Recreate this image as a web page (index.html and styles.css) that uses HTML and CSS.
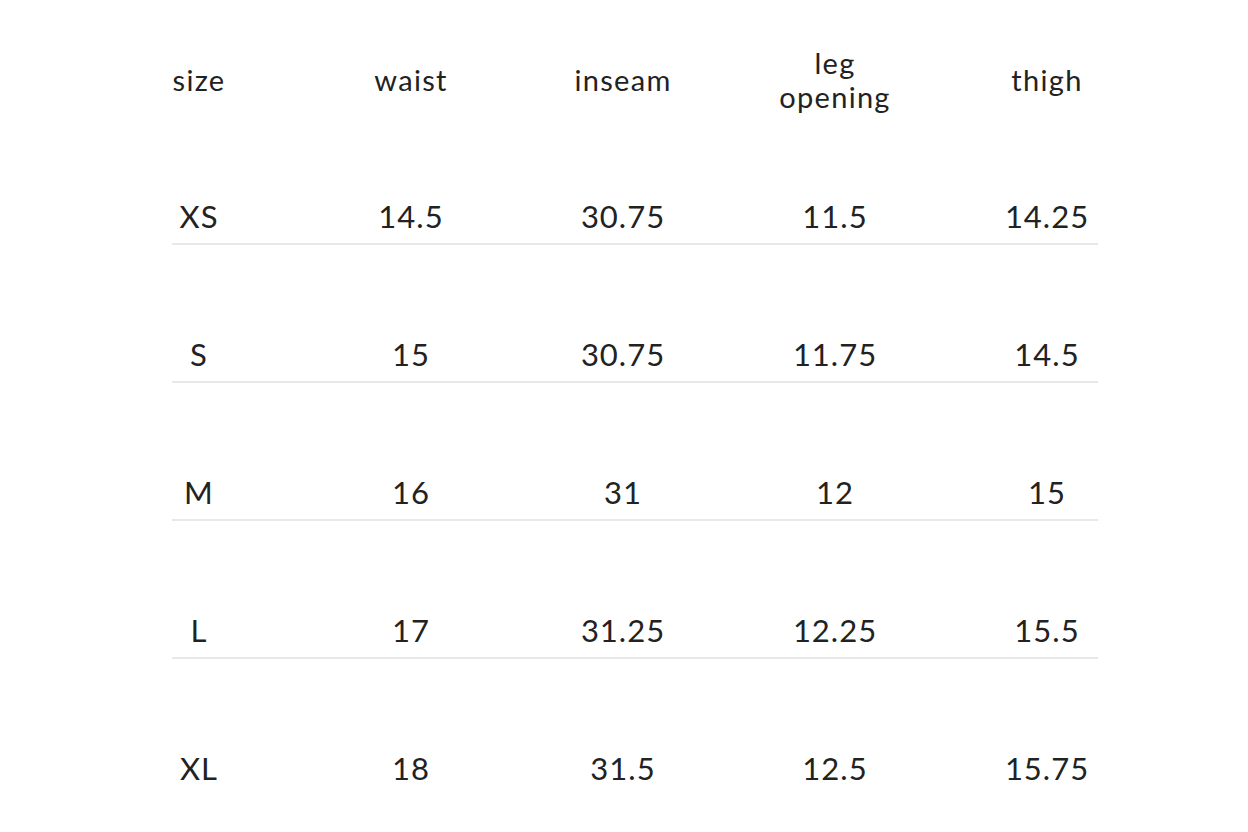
FILE: index.html
```html
<!DOCTYPE html>
<html>
<head>
<meta charset="utf-8">
<link rel="stylesheet" href="styles.css">
</head>
<body>
<div class="chart">
  <div class="row head">
    <div class="cells">
      <div class="cell">size</div>
      <div class="cell">waist</div>
      <div class="cell">inseam</div>
      <div class="cell two">leg<br>opening</div>
      <div class="cell">thigh</div>
    </div>
  </div>
  <div class="row">
    <div class="cells">
      <div class="cell">XS</div><div class="cell">14.5</div><div class="cell">30.75</div><div class="cell">11.5</div><div class="cell">14.25</div>
    </div>
  </div>
  <div class="row">
    <div class="cells">
      <div class="cell">S</div><div class="cell">15</div><div class="cell">30.75</div><div class="cell">11.75</div><div class="cell">14.5</div>
    </div>
  </div>
  <div class="row">
    <div class="cells">
      <div class="cell">M</div><div class="cell">16</div><div class="cell">31</div><div class="cell">12</div><div class="cell">15</div>
    </div>
  </div>
  <div class="row">
    <div class="cells">
      <div class="cell">L</div><div class="cell">17</div><div class="cell">31.25</div><div class="cell">12.25</div><div class="cell">15.5</div>
    </div>
  </div>
  <div class="row last">
    <div class="cells">
      <div class="cell">XL</div><div class="cell">18</div><div class="cell">31.5</div><div class="cell">12.5</div><div class="cell">15.75</div>
    </div>
  </div>
</div>
</body>
</html>
```
FILE: styles.css
```css
html, body {
  margin: 0;
  padding: 0;
  background: #ffffff;
}
body {
  font-family: "Lato", "Liberation Sans", sans-serif;
  color: #222222;
}
.chart {
  width: 926px;
  margin-left: 172px;
}
.row {
  height: 138px;
  padding-top: 82px;
  box-sizing: border-box;
  border-bottom: 2px solid #e8e8e8;
}
.row.head {
  height: 107px;
  padding-top: 46px;
  border-bottom-color: transparent;
}
.row.last {
  border-bottom: none;
}
.cells {
  display: grid;
  grid-template-columns: repeat(5, 212px);
  width: 1060px;
  margin-left: -79px;
  height: 54px;
  align-items: center;
}
.cell {
  text-align: center;
  font-size: 31px;
  line-height: 36px;
  letter-spacing: 1px;
}
.head .cell {
  font-size: 29px;
  line-height: 34px;
  letter-spacing: 1.3px;
}
```
